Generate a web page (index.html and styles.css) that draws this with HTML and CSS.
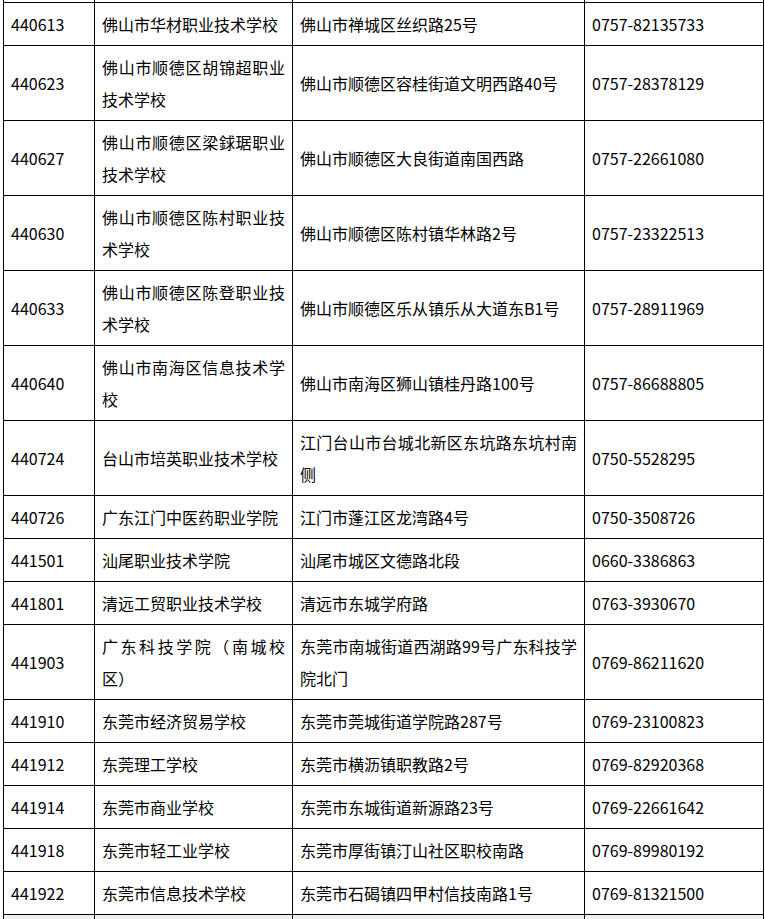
FILE: index.html
```html
<!DOCTYPE html>
<html lang="zh-CN">
<head>
<meta charset="utf-8">
<title>学校列表</title>
<link rel="stylesheet" href="styles.css">
</head>
<body>
<div class="page">
<table class="list">
<colgroup>
<col class="c-code">
<col class="c-name">
<col class="c-addr">
<col class="c-tel">
</colgroup>
<tbody>
<tr class="cut-top"><td></td><td></td><td></td><td></td></tr>
<tr><td>440613</td><td>佛山市华材职业技术学校</td><td>佛山市禅城区丝织路25号</td><td>0757-82135733</td></tr>
<tr><td>440623</td><td>佛山市顺德区胡锦超职业技术学校</td><td>佛山市顺德区容桂街道文明西路40号</td><td>0757-28378129</td></tr>
<tr><td>440627</td><td>佛山市顺德区梁銶琚职业技术学校</td><td>佛山市顺德区大良街道南国西路</td><td>0757-22661080</td></tr>
<tr><td>440630</td><td>佛山市顺德区陈村职业技术学校</td><td>佛山市顺德区陈村镇华林路2号</td><td>0757-23322513</td></tr>
<tr><td>440633</td><td>佛山市顺德区陈登职业技术学校</td><td>佛山市顺德区乐从镇乐从大道东B1号</td><td>0757-28911969</td></tr>
<tr><td>440640</td><td>佛山市南海区信息技术学校</td><td>佛山市南海区狮山镇桂丹路100号</td><td>0757-86688805</td></tr>
<tr><td>440724</td><td>台山市培英职业技术学校</td><td>江门台山市台城北新区东坑路东坑村南侧</td><td>0750-5528295</td></tr>
<tr><td>440726</td><td>广东江门中医药职业学院</td><td>江门市蓬江区龙湾路4号</td><td>0750-3508726</td></tr>
<tr><td>441501</td><td>汕尾职业技术学院</td><td>汕尾市城区文德路北段</td><td>0660-3386863</td></tr>
<tr><td>441801</td><td>清远工贸职业技术学校</td><td>清远市东城学府路</td><td>0763-3930670</td></tr>
<tr><td>441903</td><td>广东科技学院（南城校区）</td><td>东莞市南城街道西湖路99号广东科技学院北门</td><td>0769-86211620</td></tr>
<tr><td>441910</td><td>东莞市经济贸易学校</td><td>东莞市莞城街道学院路287号</td><td>0769-23100823</td></tr>
<tr><td>441912</td><td>东莞理工学校</td><td>东莞市横沥镇职教路2号</td><td>0769-82920368</td></tr>
<tr><td>441914</td><td>东莞市商业学校</td><td>东莞市东城街道新源路23号</td><td>0769-22661642</td></tr>
<tr><td>441918</td><td>东莞市轻工业学校</td><td>东莞市厚街镇汀山社区职校南路</td><td>0769-89980192</td></tr>
<tr><td>441922</td><td>东莞市信息技术学校</td><td>东莞市石碣镇四甲村信技南路1号</td><td>0769-81321500</td></tr>
<tr class="cut-bottom"><td></td><td></td><td></td><td></td></tr>
</tbody>
</table>
</div>
</body>
</html>
```

FILE: styles.css
```css
html, body {
  margin: 0;
  padding: 0;
  background: #ffffff;
}

.page {
  padding-left: 3px;
}

.list {
  border-collapse: collapse;
  table-layout: fixed;
  width: 760px;
  font-family: "Noto Sans CJK SC", "Noto Sans", sans-serif;
  font-size: 16px;
  color: #000000;
}

.c-code { width: 91px; }
.c-name { width: 198px; }
.c-addr { width: 292px; }
.c-tel { width: 179px; }

.list td {
  border: 1px solid #000000;
  padding: 5px 7px;
  line-height: 32px;
  text-align: justify;
  vertical-align: middle;
  word-break: break-all;
}

.list .cut-top td {
  border-top: none;
  padding: 0;
  height: 2px;
  line-height: 0;
}

.list .cut-bottom td {
  border-bottom: none;
  padding: 0;
  height: 10px;
  line-height: 0;
  background: #f0f0f0;
}
```
